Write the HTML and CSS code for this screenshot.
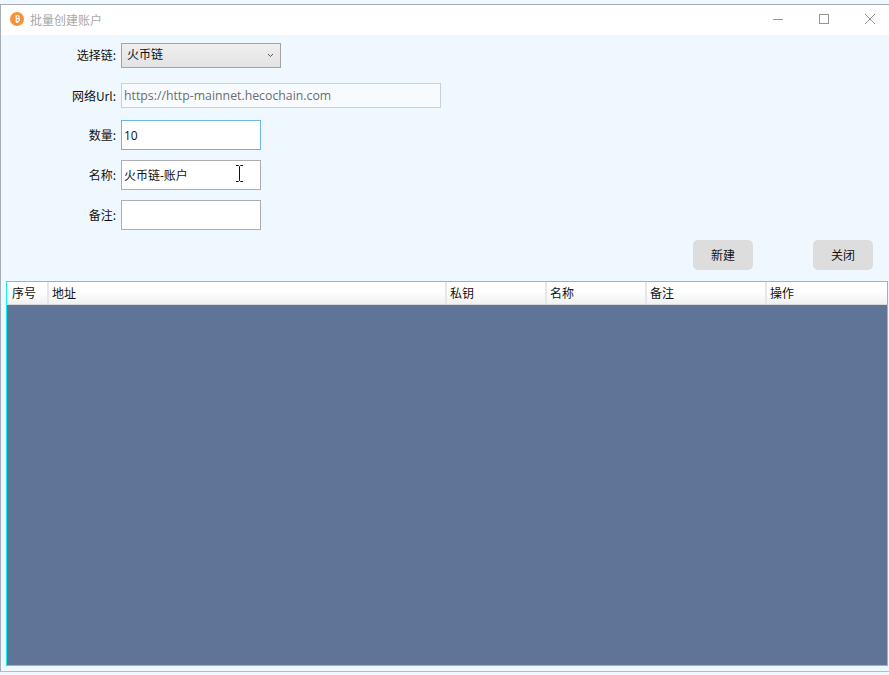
FILE: index.html
```html
<!DOCTYPE html>
<html lang="zh">
<head>
<meta charset="utf-8">
<title>批量创建账户</title>
<link rel="stylesheet" href="styles.css">
</head>
<body>
<div class="window">
  <header class="titlebar">
    <svg class="logo" width="14" height="14" viewBox="0 0 14 14"><circle cx="7" cy="7" r="7" fill="#f7923a"/><path d="M5.4 3.8h2.3c1 0 1.5.6 1.5 1.4 0 .6-.3 1-.8 1.2.7.2 1.1.7 1.1 1.4 0 1-.7 1.6-1.8 1.6H5.4M6.2 3.8v6.2M6.2 6.7h1.9M6.6 3v1M7.9 3v1M6.6 10v1M7.9 10v1" fill="none" stroke="#fff" stroke-width="1.1"/></svg>
    <span class="title">批量创建账户</span>
    <div class="controls">
      <svg class="ctl" width="12" height="12" viewBox="0 0 12 12"><path d="M1 6.5h10" stroke="#999" fill="none"/></svg>
      <svg class="ctl" width="12" height="12" viewBox="0 0 12 12"><rect x="1.5" y="1.5" width="9" height="9" stroke="#999" fill="none"/></svg>
      <svg class="ctl" width="12" height="12" viewBox="0 0 12 12"><path d="M1 1l10 10M11 1L1 11" stroke="#999" fill="none"/></svg>
    </div>
  </header>
  <main class="content">
    <form class="form">
      <div class="row row-select">
        <label class="label label-select">选择链:</label>
        <div class="select"><span>火币链</span>
          <svg class="chev" width="7" height="5" viewBox="0 0 7 5"><path d="M1 1l2.5 2.5L6 1" fill="none" stroke="#555"/></svg>
        </div>
      </div>
      <div class="row row-url">
        <label class="label">网络Url:</label>
        <div class="input input-url">https://http-mainnet.hecochain.com</div>
      </div>
      <div class="row row-first">
        <label class="label">数量:</label>
        <div class="input input-focus">10</div>
      </div>
      <div class="row">
        <label class="label">名称:</label>
        <div class="input">火币链-账户</div>
      </div>
      <div class="row">
        <label class="label">备注:</label>
        <div class="input"></div>
      </div>
    </form>
    <div class="actions">
      <button class="btn" type="button">新建</button>
      <button class="btn" type="button">关闭</button>
    </div>
    <section class="table">
      <div class="thead">
        <div class="th c1">序号</div>
        <div class="th c2">地址</div>
        <div class="th c3">私钥</div>
        <div class="th c4">名称</div>
        <div class="th c5">备注</div>
        <div class="th c6">操作</div>
      </div>
      <div class="tbody"></div>
    </section>
  </main>
  <svg class="cursor" width="9" height="17" viewBox="0 0 9 17"><path d="M1 .5h2.500l1 1 1-1H8M4.500 1.500v14M1 16.500h2.500l1-1 1 1H8" fill="none" stroke="#111"/></svg>
</div>
</body>
</html>
```
FILE: styles.css
```css
* { box-sizing: border-box; }
html, body { margin: 0; padding: 0; }
body {
  width: 889px;
  height: 675px;
  overflow: hidden;
  background: #eff7ff;
  padding-top: 4px;
  font-family: "Noto Sans CJK SC", "Open Sans", sans-serif;
  font-size: 12px;
  color: #111;
}
.window {
  position: relative;
  height: 668px;
  border-top: 1px solid #a4aeb8;
  border-left: 1px solid #a4aeb8;
  border-bottom: 1px solid #b4bcc4;
  background: #eff7ff;
}
.titlebar {
  display: flex;
  align-items: center;
  height: 30px;
  background: #fff;
  padding: 0 0 2px 9px;
}
.logo { margin-right: 6px; }
.title { color: #a8a8a8; }
.controls {
  margin-left: auto;
  display: flex;
  gap: 34px;
  padding-right: 13px;
}
.form { padding-top: 8px; }
.row {
  display: flex;
  align-items: center;
  height: 30px;
  margin-bottom: 10px;
}
.row-select { height: 25px; margin-bottom: 15px; }
.row-url { height: 25px; margin-bottom: 12px; }
.label {
  width: 115px;
  text-align: right;
  margin-right: 5px;
  line-height: 16px;
}
.label-select { padding-bottom: 2px; }
.select {
  width: 160px;
  height: 25px;
  display: flex;
  align-items: center;
  justify-content: space-between;
  padding: 0 6px 5px 5px;
  border: 1px solid #a3a3a3;
  background: linear-gradient(#efefef, #e3e3e3);
}
.chev { margin-top: 5px; }
.input {
  width: 140px;
  height: 30px;
  display: flex;
  align-items: center;
  padding: 0 2px;
  border: 1px solid #abadb3;
  background: #fff;
  font-family: "Open Sans", "Noto Sans CJK SC", sans-serif;
  font-size: 12px;
}
.input-focus { border-color: #6db4ee; }
.input-url {
  width: 320px;
  height: 25px;
  border-color: #c9d0d6;
  background: #f8fbfe;
  color: #6d6d6d;
  font-size: 12.300px;
}
.actions {
  display: flex;
  justify-content: flex-end;
  gap: 60px;
  padding-right: 16px;
}
.btn {
  width: 60px;
  height: 30px;
  padding: 0 0 2px;
  border: 0;
  border-radius: 5px;
  background: #dddddd;
  color: #111;
  font: inherit;
}
.table {
  margin: 11px 0 0 5px;
  width: 882px;
  height: 385px;
  display: flex;
  flex-direction: column;
  border: 1px solid #10f2f2;
}
.thead {
  display: flex;
  height: 23px;
  background: linear-gradient(#fff 40%, #f0f1f2);
  border-bottom: 1px solid #d6d8da;
}
.th {
  padding-left: 3px;
  line-height: 22px;
  border-left: 2px solid #e6e7e8;
}
.c1 { width: 40px; padding-left: 5px; border-left: 0; }
.c2 { width: 398px; }
.c3 { width: 100px; }
.c4 { width: 100px; }
.c5 { width: 120px; }
.c6 { flex: 1; }
.tbody { flex: 1; background: #5f7496; }
.cursor { position: absolute; left: 234px; top: 160px; }
```
